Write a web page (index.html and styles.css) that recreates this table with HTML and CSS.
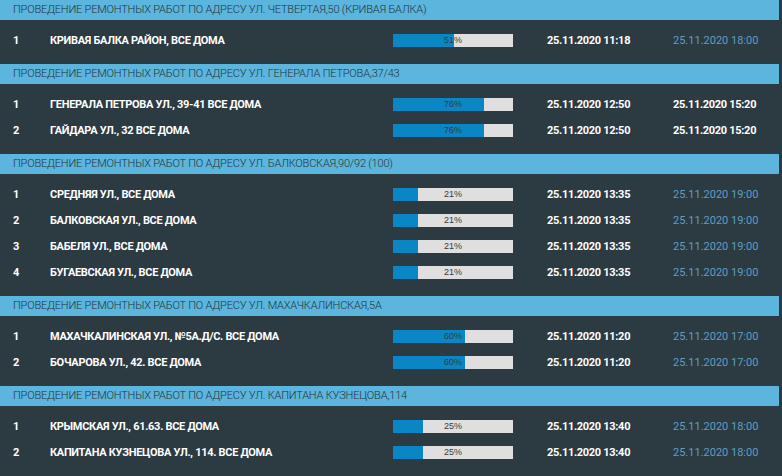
FILE: index.html
```html
<!DOCTYPE html>
<html lang="ru">
<head>
<meta charset="utf-8">
<title>Ремонтные работы</title>
<link rel="stylesheet" href="styles.css">
</head>
<body>
<div class="board">

  <section class="group">
    <div class="group-title">Проведение ремонтных работ по адресу ул. Четвертая,50 (Кривая Балка)</div>
    <div class="rows">
      <div class="row">
        <span class="num">1</span>
        <span class="name">Кривая Балка район, все дома</span>
        <span class="bar"><span class="fill" style="width:51%"></span><span class="pct">51%</span></span>
        <span class="start">25.11.2020 11:18</span>
        <span class="end">25.11.2020 18:00</span>
      </div>
    </div>
  </section>

  <section class="group">
    <div class="group-title">Проведение ремонтных работ по адресу ул. Генерала Петрова,37/43</div>
    <div class="rows">
      <div class="row">
        <span class="num">1</span>
        <span class="name">Генерала Петрова ул., 39-41 все дома</span>
        <span class="bar"><span class="fill" style="width:76%"></span><span class="pct">76%</span></span>
        <span class="start">25.11.2020 12:50</span>
        <span class="end late">25.11.2020 15:20</span>
      </div>
      <div class="row">
        <span class="num">2</span>
        <span class="name">Гайдара ул., 32 все дома</span>
        <span class="bar"><span class="fill" style="width:76%"></span><span class="pct">76%</span></span>
        <span class="start">25.11.2020 12:50</span>
        <span class="end late">25.11.2020 15:20</span>
      </div>
    </div>
  </section>

  <section class="group">
    <div class="group-title">Проведение ремонтных работ по адресу ул. Балковская,90/92 (100)</div>
    <div class="rows">
      <div class="row">
        <span class="num">1</span>
        <span class="name">Средняя ул., все дома</span>
        <span class="bar"><span class="fill" style="width:21%"></span><span class="pct">21%</span></span>
        <span class="start">25.11.2020 13:35</span>
        <span class="end">25.11.2020 19:00</span>
      </div>
      <div class="row">
        <span class="num">2</span>
        <span class="name">Балковская ул., все дома</span>
        <span class="bar"><span class="fill" style="width:21%"></span><span class="pct">21%</span></span>
        <span class="start">25.11.2020 13:35</span>
        <span class="end">25.11.2020 19:00</span>
      </div>
      <div class="row">
        <span class="num">3</span>
        <span class="name">Бабеля ул., все дома</span>
        <span class="bar"><span class="fill" style="width:21%"></span><span class="pct">21%</span></span>
        <span class="start">25.11.2020 13:35</span>
        <span class="end">25.11.2020 19:00</span>
      </div>
      <div class="row">
        <span class="num">4</span>
        <span class="name">Бугаевская ул., все дома</span>
        <span class="bar"><span class="fill" style="width:21%"></span><span class="pct">21%</span></span>
        <span class="start">25.11.2020 13:35</span>
        <span class="end">25.11.2020 19:00</span>
      </div>
    </div>
  </section>

  <section class="group">
    <div class="group-title">Проведение ремонтных работ по адресу ул. Махачкалинская,5А</div>
    <div class="rows">
      <div class="row">
        <span class="num">1</span>
        <span class="name">Махачкалинская ул., №5А.Д/С. все дома</span>
        <span class="bar"><span class="fill" style="width:60%"></span><span class="pct">60%</span></span>
        <span class="start">25.11.2020 11:20</span>
        <span class="end">25.11.2020 17:00</span>
      </div>
      <div class="row">
        <span class="num">2</span>
        <span class="name">Бочарова ул., 42. все дома</span>
        <span class="bar"><span class="fill" style="width:60%"></span><span class="pct">60%</span></span>
        <span class="start">25.11.2020 11:20</span>
        <span class="end">25.11.2020 17:00</span>
      </div>
    </div>
  </section>

  <section class="group">
    <div class="group-title">Проведение ремонтных работ по адресу ул. Капитана Кузнецова,114</div>
    <div class="rows">
      <div class="row">
        <span class="num">1</span>
        <span class="name">Крымская ул., 61.63. все дома</span>
        <span class="bar"><span class="fill" style="width:25%"></span><span class="pct">25%</span></span>
        <span class="start">25.11.2020 13:40</span>
        <span class="end">25.11.2020 18:00</span>
      </div>
      <div class="row">
        <span class="num">2</span>
        <span class="name">Капитана Кузнецова ул., 114. все дома</span>
        <span class="bar"><span class="fill" style="width:25%"></span><span class="pct">25%</span></span>
        <span class="start">25.11.2020 13:40</span>
        <span class="end">25.11.2020 18:00</span>
      </div>
    </div>
  </section>

</div>
</body>
</html>
```

FILE: styles.css
```css
html, body {
  margin: 0;
  padding: 0;
  background: #2c3a42;
  overflow: hidden;
}

.board {
  width: 779px;
  font-family: Roboto, "Liberation Sans", sans-serif;
}

.group-title {
  height: 20px;
  line-height: 20px;
  padding-left: 13px;
  background: #5bb5dc;
  color: #24343e;
  font-size: 11px;
  font-weight: 300;
  letter-spacing: -0.2px;
  text-transform: uppercase;
  white-space: nowrap;
}

.rows {
  padding: 7px 0 11px 13px;
}

.row {
  display: grid;
  grid-template-columns: 37px 343px 154px 126px 1fr;
  align-items: center;
  height: 26px;
  color: #ffffff;
  font-size: 11px;
  font-weight: 700;
  text-transform: uppercase;
  white-space: nowrap;
}

.name,
.start,
.end.late {
  letter-spacing: -0.3px;
}

.bar {
  position: relative;
  display: block;
  width: 120px;
  height: 13px;
  background: #dfdfdf;
}

.fill {
  display: block;
  height: 100%;
  background: #0b86c5;
}

.pct {
  position: absolute;
  left: 0;
  right: 0;
  top: 0;
  line-height: 13px;
  text-align: center;
  font-family: "Liberation Sans", Arial, sans-serif;
  font-size: 9px;
  font-weight: 400;
  letter-spacing: 0;
  color: #3a3a3a;
}

.end {
  color: #5d9fc2;
  font-weight: 400;
}

.end.late {
  color: #ffffff;
  font-weight: 700;
}
```
